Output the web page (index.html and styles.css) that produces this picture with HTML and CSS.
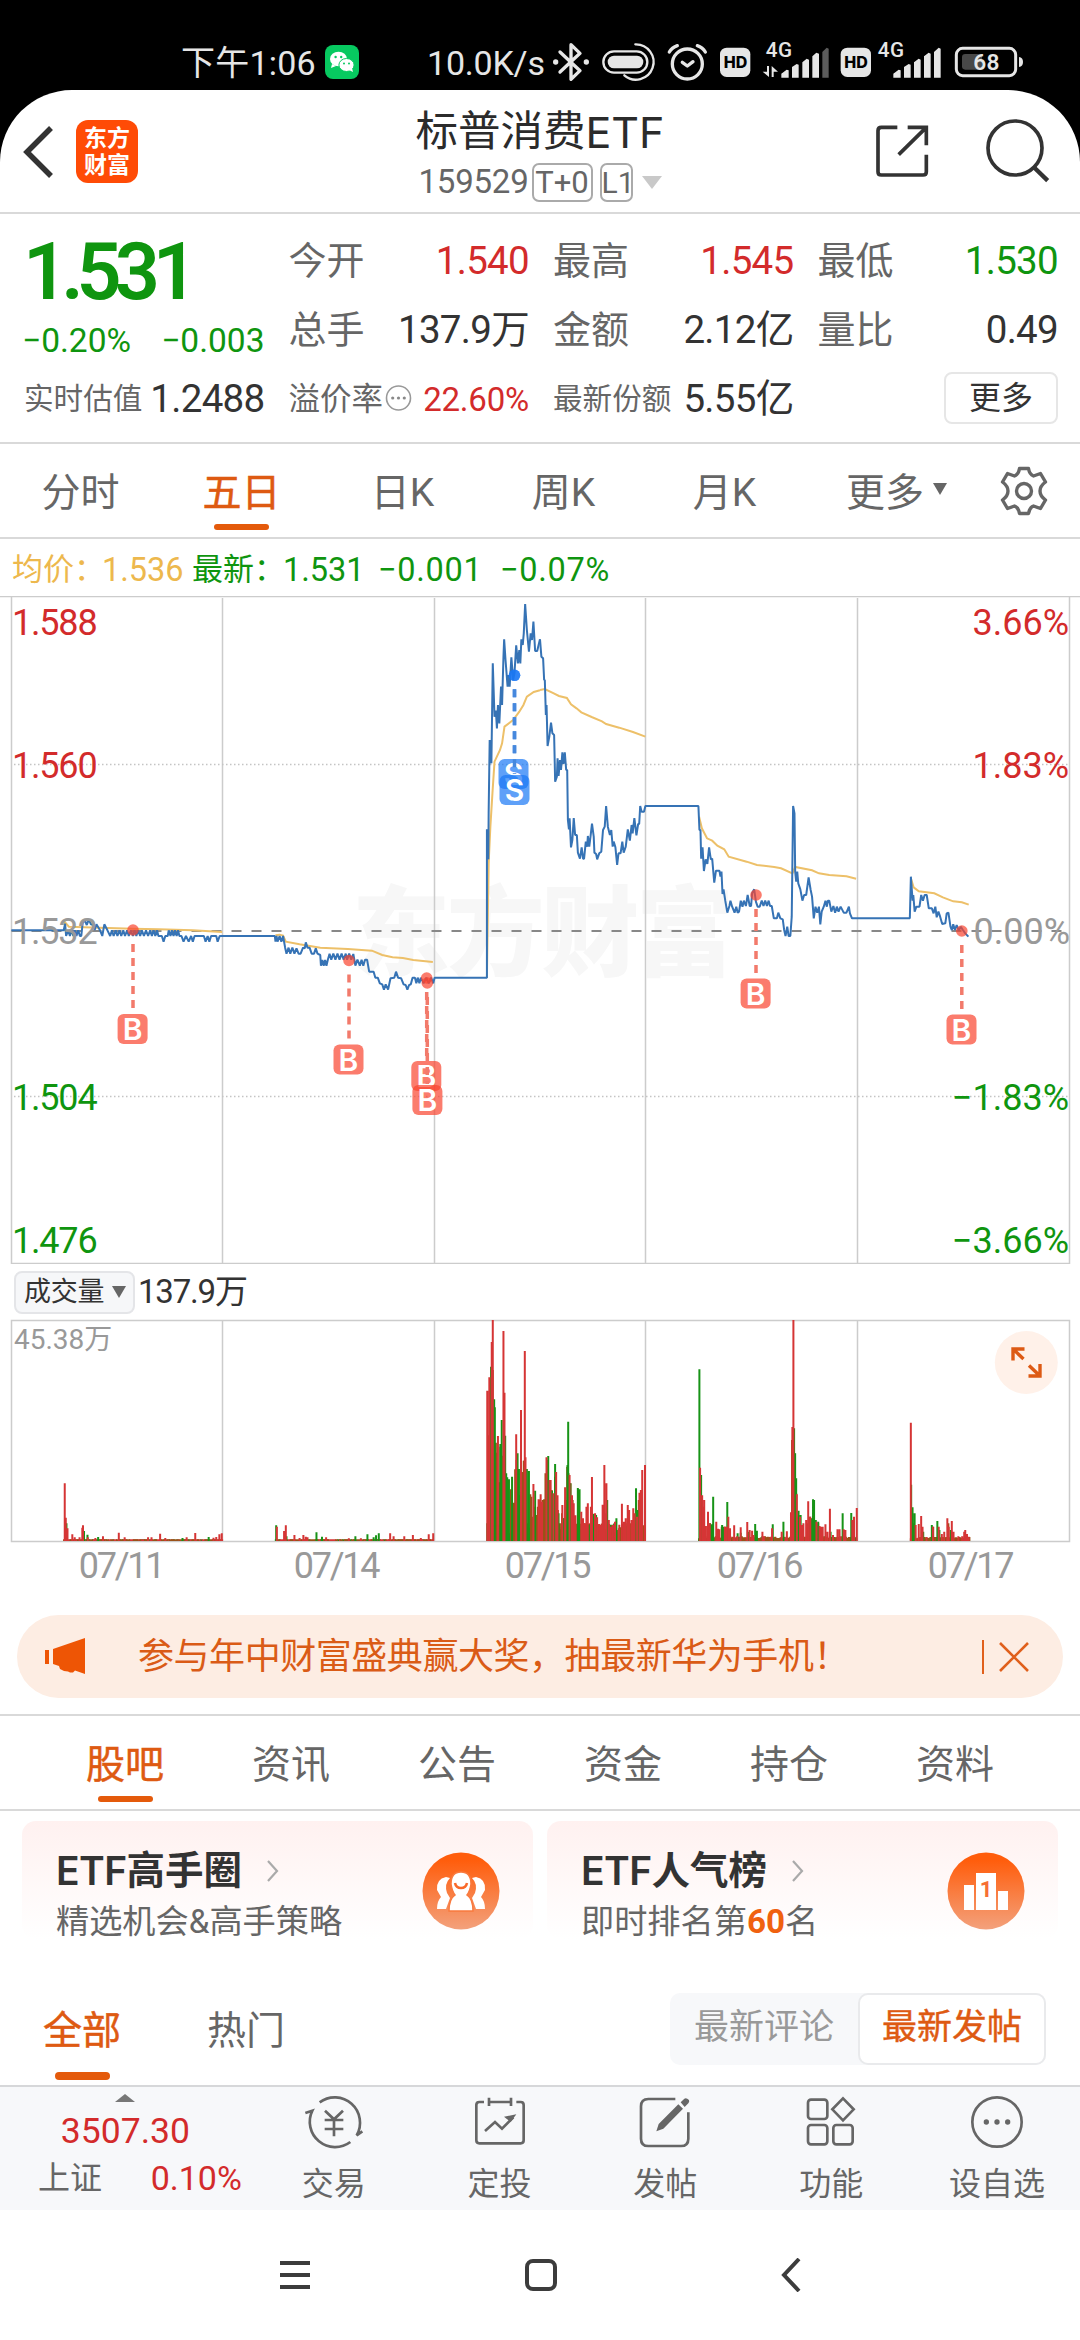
FILE: index.html
```html
<!DOCTYPE html>
<html lang="zh-CN">
<head>
<meta charset="utf-8">
<title>标普消费ETF</title>
<link rel="stylesheet" href="styles.css">
</head>
<body>
<div class="status">
  <span class="clock">下午1:06</span>
  <svg class="wechat" width="34" height="34" viewBox="0 0 34 34"><rect width="34" height="34" rx="8" fill="#07c960"/><ellipse cx="13.5" cy="14" rx="8.5" ry="7.3" fill="#fff"/><path d="M7 19l-1 4 5-2z" fill="#fff"/><ellipse cx="21.5" cy="20" rx="7.6" ry="6.5" fill="#fff" stroke="#07c960" stroke-width="1"/><path d="M24 25l4 2-1-4z" fill="#fff"/><g fill="#07c960"><circle cx="10.6" cy="12" r="1.2"/><circle cx="16.2" cy="12" r="1.2"/><circle cx="19" cy="18.4" r="1"/><circle cx="24" cy="18.4" r="1"/></g></svg>
  <span class="speed">10.0K/s</span>
  <svg class="status-icons" width="484" height="60" viewBox="30 0 1452 180">
    <g fill="none" stroke="#e6e6e6" stroke-width="8" stroke-linecap="round" stroke-linejoin="round">
      <path d="M60 66L120 122 93 148V44L120 70 60 126" stroke-width="10"/>
      <rect x="190" y="64" width="132" height="64" rx="32" stroke-width="7"/>
      <path d="M286 43A53 53 0 1 1 253 136" stroke-width="7"/>
      <circle cx="442" cy="102" r="45" stroke-width="10"/>
      <path d="M427 97L442 108 459 95M388 66Q396 52 412 47M496 66Q488 52 472 47" stroke-width="10"/>
      <rect x="1249" y="55" width="178" height="82" rx="19" stroke-width="9"/>
    </g>
    <g fill="#e6e6e6">
      <circle cx="47" cy="96" r="8"/><circle cx="139" cy="96" r="8"/>
      <rect x="203" y="77" width="107" height="38" rx="19"/>
      <rect x="540" y="53" width="91" height="88" rx="20"/><rect x="902" y="53" width="91" height="88" rx="20"/>
      <path d="M724 143V131L740 119 746 121V143zM756 143V111L770 102 776 104V143zM787 143V97L800 86 807 89V143zM817 143V79L829 68 837 71V143zM1060 143V131L1076 119 1082 121V143zM1092 143V111L1106 102 1112 104V143zM1122 143V97L1136 86 1142 89V143zM1152 143V79L1166 68 1172 71V143zM1182 143V66L1196 53 1202 56V143z"/>
      <path d="M681 108H687V141L668 125H681zM695 141V108L714 125H701V141z"/>
      <path d="M1437 81Q1449 83 1449 96 1449 109 1437 111z"/>
    </g>
    <path d="M847 143V66L860 53 866 56V143z" fill="#5c5c5c"/>
    <path d="M1276 72H1326V119H1276Q1266 119 1266 109V82Q1266 72 1276 72z" fill="#484848"/>
    <g class="status-text"><text x="551" y="113" class="hd">HD</text><text x="913" y="113" class="hd">HD</text><text x="677" y="82" class="g4">4G</text><text x="1013" y="82" class="g4">4G</text><text x="1300" y="121" class="pct">68</text></g>
  </svg>
</div>

<main class="app">
  <header class="header">
    <div class="header-left">
      <svg class="back" width="32" height="54" viewBox="0 0 32 54" fill="none" stroke="#333" stroke-width="5.500"><path d="M29 3L5 27 29 51"/></svg>
      <div class="logo"><span>东方</span><span>财富</span></div>
    </div>
    <div class="title">
      <h1>标普消费<span class="latin">ETF</span></h1>
      <div class="code"><span class="num">159529</span><span class="tag">T+0</span><span class="tag tag-l">L1</span><svg width="20" height="13" viewBox="0 0 20 13"><path d="M0 0H20L10 13z" fill="#c9c9c9"/></svg></div>
    </div>
    <svg class="header-icons" width="176" height="66" viewBox="1000 262 528 198" fill="none" stroke="#333" stroke-width="11">
      <path d="M1070 293H1022Q1012 293 1012 303V426Q1012 436 1022 436H1147Q1157 436 1157 426V375M1101 293H1157V347M1157 293L1074 375"/>
      <circle cx="1423" cy="355" r="81"/><path d="M1479 412L1521 453" stroke-width="13"/>
    </svg>
  </header>

  <section class="quote">
    <div class="price down"><b>1.531</b><p><span>−0.20%</span><span>−0.003</span></p></div>
    <div class="stat"><label>今开</label><span class="up">1.540</span></div>
    <div class="stat"><label>最高</label><span class="up">1.545</span></div>
    <div class="stat"><label>最低</label><span class="down">1.530</span></div>
    <div class="stat"><label>总手</label><span>137.9万</span></div>
    <div class="stat"><label>金额</label><span>2.12亿</span></div>
    <div class="stat"><label>量比</label><span>0.49</span></div>
    <div class="stat small"><label>实时估值</label><span>1.2488</span></div>
    <div class="stat mid"><label>溢价率</label><svg width="27" height="28" viewBox="0 0 27 28"><circle cx="13.5" cy="14" r="12" fill="none" stroke="#999" stroke-width="1.6"/><g fill="#888"><circle cx="7.7" cy="14" r="1.6"/><circle cx="13.5" cy="14" r="1.6"/><circle cx="19.3" cy="14" r="1.6"/></g></svg><span class="up">22.60%</span></div>
    <div class="stat small"><label>最新份额</label><span>5.55亿</span></div>
    <div class="stat end"><button class="more">更多</button></div>
  </section>

  <nav class="periods">
    <a>分时</a><a class="on">五日</a><a>日K</a><a>周K</a><a>月K</a>
    <a class="drop">更多<svg width="14" height="12" viewBox="0 0 14 12"><path d="M0 0H14L7 12z" fill="#666"/></svg></a>
    <svg class="gear" width="48" height="50" viewBox="0 0 48 50" fill="none" stroke="#666" stroke-width="3.4" stroke-linejoin="round"><path d="M19.500 2.500h9q1 6 5 7.500l7-2.500 5 8.500q-5.500 4-5.500 9t5.500 9l-5 8.500-7-2.500q-4 1.500-5 7.500h-9q-1-6-5-7.500l-7 2.500-5-8.500q5.500-4 5.500-9t-5.500-9l5-8.500 7 2.500q4-1.500 5-7.500z"/><circle cx="24" cy="25" r="7.500"/></svg>
  </nav>

  <div class="legend"><span class="avg">均价：</span><span class="avg">1.536</span><span class="down">最新：</span><span class="down">1.531</span><span class="down wide">−0.001</span><span class="down wide">−0.07%</span></div>

  <svg class="chart" width="1080" height="668" viewBox="0 596 1080 668">
    <text class="watermark" x="352" y="968" textLength="382">东方财富</text>
    <g class="grid">
      <path d="M0 596.500H1080M11.500 596V1263.500H1069.500V596M222.500 598V1263M434.500 598V1263M645.500 598V1263M857.500 598V1263"/>
      <path class="dots" d="M14 764.500H1068M14 1096.500H1068"/>
      <path class="zero" d="M11.500 931H1066"/>
    </g>
    <g class="average">
      <g transform="translate(0 580) scale(.34436 .33333)"><path d="M186 1035L189 1027 200 1040 290 1043 386 1046 460 1048 560 1051 645 1056M800 1066L812 1064 822 1067 830 1085 870 1093 930 1103 1010 1107 1080 1112 1110 1125 1140 1132 1170 1134 1200 1140 1257 1146M1414 1193L1419 850 1424 740 1430 640 1436 545 1452 510 1458 490 1465 440 1490 420 1508 395 1520 375 1530 350 1550 336 1568 331"/></g>
      <g transform="translate(540 580) scale(.34436 .33333)"><path d="M0 330L14 327 40 340 55 348 78 354 90 373 106 385 120 397 150 411 180 424 192 432 230 443 270 456 306 470M462 710L470 745 485 775 500 782 515 797 535 808 548 830 600 845 630 855 680 861 700 865 733 880 741 861 790 871 810 880 840 885 890 889 918 896M1077 895L1085 922 1100 934 1145 940 1170 952 1200 964 1225 967 1245 974"/></g>
    </g>
    <g class="price-line">
      <g transform="translate(0 580) scale(.34436 .33333)"><path d="M33 1051H185L189 1031 192 1068 198 1051 203 1068 208 1051 213 1068 217 1051 222 1068 227 1051 232 1068 236 1068 240 1030 246 1020 252 1035 258 1018 264 1033 271 1035 275 1050 280 1033 290 1050 297 1068 303 1033 312 1051 320 1068 325 1051 330 1068 336 1051 341 1068 347 1051 352 1068 358 1051 363 1068 369 1051 374 1068 380 1051 386 1068 391 1051 396 1068 401 1051 407 1068 412 1051 418 1068 424 1051 430 1068 436 1051 441 1068 446 1051 451 1068 456 1051 460 1068H470L475 1085 480 1068 487 1068 490 1051 495 1068 499 1051 504 1068 508 1051 513 1068 517 1051 521 1068H527L533 1085 540 1068 548 1085 555 1068 560 1085 565 1068H592L597 1085 603 1068 608 1085 613 1068H628L632 1085 638 1068H798L800 1085 803 1068 806 1085 812 1068 817 1085 822 1068 828 1103 832 1121 838 1103 843 1121 849 1103 855 1121 861 1105 867 1121H873L880 1103 885 1105 888 1087 893 1103H899L905 1121H912L917 1105 922 1121 930 1125 932 1157 936 1140 940 1157 944 1140 948 1157 952 1139 957 1121 962 1139 968 1121 974 1139 980 1121 986 1139 992 1121 998 1139 1004 1121 1008 1139 1014 1121 1020 1139 1026 1122 1032 1157 1038 1139 1045 1157 1050 1139 1055 1157 1060 1139H1066L1072 1175H1085L1090 1193H1097L1103 1210 1110 1213 1115 1229 1120 1213 1127 1229 1134 1195 1145 1193 1150 1175 1156 1193 1165 1195 1172 1213 1178 1215 1183 1229 1188 1215 1193 1213 1198 1193 1205 1193 1209 1210 1213 1193 1218 1210 1222 1193 1230 1210 1238 1193 1245 1210 1252 1193 1258 1210 1262 1193H1414V748L1418 838 1419 700 1422 480 1427 550 1431 250 1436 410 1440 392 1443 445 1446 375 1450 430 1455 320 1458 375 1462 230 1464 178 1468 240 1474 320 1477 285 1480 320 1485 232 1490 300 1494 280 1499 196 1504 250 1508 210 1511 250 1514 178 1518 195 1521 160 1525 72 1530 150 1536 215 1541 160 1545 180 1549 125 1554 213 1560 213 1568 178"/></g>
      <g transform="translate(540 580) scale(.34436 .33333)"><path d="M0 178L4 230 9 235 12 300 14 300 17 405 19 375 22 498 27 470 32 428 36 460 41 465 44 605 49 590 51 535 54 588 58 540 61 570 65 517 68 552 72 517 76 570 79 570 81 720 84 748 86 715 90 802 94 780 98 714 102 765 107 765 110 818 116 836 121 802 125 836 128 836 133 785 137 800 139 768 143 800 147 767 151 731 156 770 158 818 163 822 166 838 172 820 178 815 183 750 188 740 192 678 197 740 203 765 207 750 211 800 214 785 219 802 224 855 228 820 234 820 239 785 243 818 249 800 255 748 261 782 266 735 269 760 274 714 280 766 285 732 288 732 291 678 295 695 302 695 306 678H460L463 750 466 750 468 836 472 802 476 873 481 838 486 852 491 802 496 838 500 836 506 908 511 872 521 872 524 890 527 875 530 942 533 928 538 962 544 998 550 978 553 962 558 980 565 998 570 980 574 998 578 995 583 962 588 980 592 962 598 978 603 945 609 978 613 978 616 940 622 928 627 965 632 980 638 980 644 962 649 978 654 962 659 978 664 962 668 978 673 978 679 1015 688 1015 692 998 698 1015 705 1018 709 1050 713 1068 718 1040 722 1068 727 1068 731 1010 735 678 739 700 741 875 744 905 747 875 750 910 756 928 762 962 767 945 773 945 780 892 786 930 790 950 795 1015 800 980 805 998 810 980 814 1033 818 995 824 980 829 962 833 980 836 962 840 962 846 995 852 978 857 998 862 980 867 995 873 980 882 998 890 998 897 980 900 1000 906 1015H1074L1077 890 1082 962 1084 945 1088 995 1093 980 1102 980 1107 945 1112 962 1117 945 1123 945 1129 985 1138 985 1143 1000 1148 980 1152 1012 1157 995 1162 1010 1168 1032 1177 1030 1181 1000 1186 998 1192 1040 1196 1050 1200 1033 1205 1050 1210 1035 1216 1052 1222 1040 1228 1050 1235 1060 1244 1070"/></g>
    </g>
    <g class="axis up"><text x="12" y="635">1.588</text><text x="12" y="778">1.560</text><text class="r" x="1069" y="635">3.66%</text><text class="r" x="1069" y="778">1.83%</text></g>
    <g class="axis mute"><text x="12" y="944">1.532</text><text class="r" x="1070" y="944">0.00%</text></g>
    <g class="axis down"><text x="12" y="1110">1.504</text><text x="12" y="1253">1.476</text><text class="r" x="1069" y="1110">−1.83%</text><text class="r" x="1069" y="1253">−3.66%</text></g>
    <g id="marks"></g>
  </svg>

  <div class="vol-head"><button>成交量<svg width="14" height="12" viewBox="0 0 14 12"><path d="M0 0H14L7 12z" fill="#666"/></svg></button><span>137.9万</span></div>

  <svg class="volume" width="1080" height="271" viewBox="0 1319 1080 271">
    <path class="grid" d="M11.500 1320.500H1069.500V1541.500H11.500zM222.500 1321V1541M434.500 1321V1541M645.500 1321V1541M857.500 1321V1541"/>
    <g transform="translate(0 1260) scale(.34436 .33333)" id="bars"></g>
    <text class="vol-max" x="14" y="1349">45.38万</text>
    <g class="dates"><text x="121" y="1577.500">07/11</text><text x="336" y="1577.500">07/14</text><text x="547" y="1577.500">07/15</text><text x="759" y="1577.500">07/16</text><text x="970" y="1577.500">07/17</text></g>
    <circle cx="1026.300" cy="1362.500" r="31.500" fill="#fff1e9"/>
    <path d="M1024.500 1349H1013V1360.500M1013 1349L1023.500 1359M1029 1365.500L1040 1376M1040 1364V1376H1028.500" fill="none" stroke="#dd5a14" stroke-width="3.400"/>
  </svg>

  <div class="banner">
    <svg class="horn" width="44" height="40" viewBox="0 0 44 40" fill="#ee5505"><path d="M1 13H5V27H1zM9 12L41 1V37L31 33.500 29 35.500H26L24 34.500 20 34 16 32 15 29 9 27z"/></svg>
    <span>参与年中财富盛典赢大奖，抽最新华为手机！</span>
    <i class="sep"></i>
    <svg width="30" height="30" viewBox="0 0 30 30" fill="none" stroke="#e0601c" stroke-width="2.600"><path d="M1 1L29 29M29 1L1 29"/></svg>
  </div>

  <nav class="sections"><a class="on">股吧</a><a>资讯</a><a>公告</a><a>资金</a><a>持仓</a><a>资料</a></nav>

  <div class="cards">
    <div class="card">
      <div><h2><span class="latin">ETF</span>高手圈<svg width="13" height="22" viewBox="0 0 13 22"><path d="M2 1L11 11 2 21" fill="none" stroke="#aaa" stroke-width="2.200"/></svg></h2><p>精选机会&amp;高手策略</p></div>
      <svg class="badge" width="78" height="78" viewBox="0 0 78 78"><defs><linearGradient id="o" x1="0" y1="0" x2="0" y2="1"><stop offset=".1" stop-color="#ff5d0c"/><stop offset="1" stop-color="#f3a17c"/></linearGradient></defs><circle cx="39" cy="39" r="38.500" fill="url(#o)"/><path d="M24 25Q14 27 15 38L19 45Q15 49 15 57H24L28 46 25 41Q22 32 28 26zM54 25Q64 27 63 38L59 45Q63 49 63 57H54L50 46 53 41Q56 32 50 26z" fill="#fff"/><path d="M39 20Q49 20 49 32 48 39 45 43 51 47 51 59H27Q27 47 33 43 30 39 29 32 29 20 39 20z" fill="#fff" stroke="#f97a3e" stroke-width="1.500"/><path d="M33 31Q34 36 39 36 44 36 45 31" fill="none" stroke="#f9692a" stroke-width="2.500"/></svg>
    </div>
    <div class="card">
      <div><h2><span class="latin">ETF</span>人气榜<svg width="13" height="22" viewBox="0 0 13 22"><path d="M2 1L11 11 2 21" fill="none" stroke="#aaa" stroke-width="2.200"/></svg></h2><p>即时排名第<b>60</b>名</p></div>
      <svg class="badge" width="78" height="78" viewBox="0 0 78 78"><circle cx="39" cy="39" r="38.500" fill="url(#o)"/><path d="M17 33H27V58H17zM29 21H49V58H29zM51 39H61V58H51z" fill="#fff"/><text x="39" y="45" class="rank">1</text></svg>
    </div>
  </div>

  <div class="filter">
    <a class="on">全部</a><a>热门</a>
    <div class="seg"><span>最新评论</span><span class="sel">最新发帖</span></div>
  </div>

  <footer class="bottom">
    <div class="index"><svg width="20" height="8" viewBox="0 0 20 8"><path d="M0 8L10 0 20 8z" fill="#777"/></svg><b>3507.30</b><p><span>上证</span><em>0.10%</em></p></div>
    <div class="tool"><svg width="64" height="56" viewBox="68 40 192 168"><path d="M121 65A76 76 0 0 1 232 164L249 152M213 184A76 76 0 0 1 99 90L78 97"/><path d="M137 90L164 116 191 90M136 118H192M136 145H192M164 116V167"/></svg>交易</div>
    <div class="tool"><svg width="56" height="56" viewBox="576 40 168 168"><path d="M612 64H598Q589 64 589 73V179Q589 188 598 188H722Q731 188 731 179V73Q731 64 722 64H709M627 51V76M693 51V76M627 64H693M615 151L645 124 666 144 700 110"/><path d="M672 108L709 101 692 124z" fill="#666" stroke="none"/></svg>定投</div>
    <div class="tool"><svg width="56" height="56" viewBox="1072 40 168 168"><path d="M1187 55H1106Q1084 55 1084 77V174Q1084 196 1106 196H1204Q1226 196 1226 174V95"/><path d="M1130 152L1137 130 1196 71 1210 84 1151 144zM1203 65L1214 54Q1220 50 1228 58 1230 64 1226 68L1215 79z" fill="#666" stroke="none"/></svg>发帖</div>
    <div class="tool"><svg width="56" height="56" viewBox="0 0 168 168"><rect x="15" y="17" width="58" height="58" rx="9"/><rect x="15" y="93" width="58" height="58" rx="9"/><rect x="91" y="93" width="58" height="58" rx="9"/><path d="M120 13L152 46 120 79 88 46z"/></svg>功能</div>
    <div class="tool"><svg width="56" height="56" viewBox="0 0 168 168"><circle cx="84" cy="84" r="74"/><g fill="#666" stroke="none"><circle cx="52" cy="84" r="8"/><circle cx="84" cy="84" r="8"/><circle cx="116" cy="84" r="8"/></g></svg>设自选</div>
  </footer>
</main>

<div class="sysnav">
  <svg width="30" height="28" viewBox="0 0 30 28"><path d="M0 2H30M0 14H30M0 26H30"/></svg>
  <svg width="32" height="32" viewBox="0 0 32 32"><rect x="2" y="2" width="28" height="28" rx="6"/></svg>
  <svg width="20" height="34" viewBox="0 0 20 34"><path d="M18 1L3 17 18 33"/></svg>
</div>
<script src="script.js"></script>
</body>
</html>
```
FILE: styles.css
```css
* { box-sizing: border-box; }
body { margin: 0; width: 1080px; height: 2340px; overflow: hidden; background: #000; color: #333; font-family: Roboto, "Noto Sans CJK SC", sans-serif; font-size: 38px; line-height: 1.2; }
h1, h2, p { margin: 0; font-weight: 400; }
button { font: inherit; color: inherit; padding: 0; }
svg { display: block; flex: none; }
.up { color: #d32b2b; fill: #d32b2b; }
.down { color: #0f950f; fill: #0f950f; }
.mute { fill: #999; }
.latin { font-family: Inter, sans-serif; }

.status { height: 90px; padding: 36px 0 0 181px; display: flex; align-items: center; color: #e6e6e6; font-size: 34px; white-space: nowrap; }
.clock { width: 144px; font-size: 34px; letter-spacing: .2px; }
.wechat { margin-right: 68px; margin-top: -2px; }
.speed { width: 123px; letter-spacing: -.2px; }
.status-icons { margin-top: -6px; }
.status-text { font-family: Inter, sans-serif; }
.status-text .hd { font-size: 48px; font-weight: 800; fill: #000; }
.status-text .g4 { font-size: 62px; letter-spacing: 2px; font-weight: 500; fill: #e6e6e6; font-family: Roboto; }
.status-text .pct { font-size: 68px; letter-spacing: 1px; font-weight: 600; fill: #e6e6e6; font-family: Roboto; }

.app { background: #fff; border-radius: 72px 72px 0 0; height: 2120px; display: flex; flex-direction: column; }
.header { height: 124px; border-bottom: 2px solid #d9d9d9; display: grid; grid-template-columns: 1fr auto 1fr; }
.header-left { display: flex; padding: 30px 0 0 22px; }
.back { margin-top: 5px; }
.logo { width: 62px; height: 63px; margin-left: 22px; border-radius: 12px; background: #ff4b06; color: #fff; font-size: 23px; font-weight: 700; line-height: 27px; display: flex; flex-direction: column; align-items: center; justify-content: center; }
.title { display: flex; flex-direction: column; align-items: center; padding-top: 15px; }
.title h1 { font-size: 42.500px; line-height: 54px; color: #2b2b2b; display: flex; }
.title h1 .latin { font-size: 43px; }
.code { display: flex; align-items: center; height: 46px; color: #666; font-size: 33px; }
.code .num { letter-spacing: -.2px; }
.tag { border: 2px solid #aaa; border-radius: 7px; height: 39px; line-height: 36px; width: 61px; text-align: center; font-size: 31px; margin-left: 3px; }
.tag-l { width: 33px; margin: 0 9px 0 7px; font-size: 30px; }
.header-icons { justify-self: end; margin: 27px 30px 0 0; }

.quote { height: 230px; padding: 13px 23px 0 24px; border-bottom: 2px solid #d9d9d9; display: grid; grid-template-columns: repeat(4, 1fr); column-gap: 25px; grid-template-rows: repeat(3, 69px); white-space: nowrap; }
.price { grid-row: span 2; }
.price b { display: block; height: 90px; line-height: 90px; font-size: 79px; font-weight: 600; letter-spacing: -7px; margin-left: -1px; }
.price p { display: flex; justify-content: space-between; font-size: 33.500px; line-height: 48px; margin: 0 -1px 0 -2px; }
.stat { display: flex; align-items: center; justify-content: space-between; font-size: 38.5px; }
.stat span { letter-spacing: -.7px; margin-right: -1px; }
.stat label { color: #666; font-size: 38px; }
.small label { font-size: 29.6px; }
.mid { font-size: 33px; }
.mid span { letter-spacing: -.2px; }
.mid label { font-size: 31.5px; }
.mid svg { margin-right: 9px; margin-top: -4px; }
.stat.end { justify-content: flex-end; }
.more { width: 114px; height: 52px; border: 2px solid #e6e6e6; border-radius: 8px; background: #fff; font-size: 32px; line-height: 46px; margin-top: -4px; margin-right: -1px; }

.periods { height: 95px; border-bottom: 2px solid #d9d9d9; display: flex; align-items: center; color: #666; font-size: 39px; }
.periods a { width: 161px; height: 93px; line-height: 98px; text-align: center; }
.on { color: #de5a12; -webkit-text-stroke: .5px #de5a12; display: flex; flex-direction: column; align-items: center; position: relative; }
.on::after { content: ""; position: absolute; bottom: 7px; width: 55px; height: 6px; border-radius: 3px; background: #e45a0b; }
.periods .drop { width: 194px; padding: 4px 0 0 41px; display: flex; align-items: center; }
.drop svg { margin: -7px 0 0 9px; }
.gear { margin-left: 1px; }

.legend { height: 57px; padding-left: 12px; display: grid; grid-template-columns: 90px 90px 91px 95px 122px auto; align-items: center; justify-content: start; font-size: 32.5px; padding-top: 5px; white-space: nowrap; }
.legend span:nth-child(odd):nth-child(-n+3) { font-size: 31px; }
.legend .wide { letter-spacing: .7px; }
.avg { color: #edb84d; }

.grid { fill: none; stroke: #ccc; stroke-width: 2; }
.grid path { stroke-width: 1.5; }
.grid .dots { stroke-dasharray: 1.500 2.500; stroke: #c4c4c4; }
.grid .zero { stroke: #888; stroke-width: 2; stroke-dasharray: 10 10; }
.watermark { font-weight: 900; font-size: 98px; fill: #f7f7f7; }
.average path, .price-line path { fill: none; stroke: #edc069; stroke-width: 2; vector-effect: non-scaling-stroke; }
.price-line path { stroke: #3673b5; stroke-linejoin: bevel; }
.axis { font-size: 36px; letter-spacing: -1.200px; }
.axis .r { text-anchor: end; letter-spacing: 0; }
.mark { fill: #f9452f; fill-opacity: .7; }
.mark-s { fill: #1a78f5; }
.stem { stroke: #f27a6b; stroke-width: 3.500; stroke-dasharray: 8 6; }
.mark-s .stem { stroke: #4688dd; }
.mark text { font-size: 30px; font-weight: 600; fill: #fff; fill-opacity: 1; text-anchor: middle; font-family: Inter, sans-serif; }

.vol-head { height: 55px; display: flex; align-items: center; padding-left: 14px; font-size: 33px; letter-spacing: -1.200px; padding-top: 1px; }
.vol-head button { width: 121px; height: 43px; border: 2px solid #e4e5e8; border-radius: 8px; background: #f6f7f9; font-size: 27px; letter-spacing: -.2px; display: flex; align-items: center; padding-left: 8px; margin-right: 3px; }
.vol-head svg { margin-left: 8px; }
.volume .grid { stroke-width: 1.500; }
.volume .bar { fill: none; stroke-width: 2; vector-effect: non-scaling-stroke; }
.red { stroke: #d53535; }
.green { stroke: #179317; }
.mix { stroke: #9a5218; }
.vol-max { font-size: 28px; fill: #999; }
.dates { font-size: 36px; fill: #999; text-anchor: middle; letter-spacing: -2.300px; }

.banner { margin: 25px 17px 16px; height: 83px; border-radius: 42px; background: #fdede3; color: #da5b16; font-size: 36px; display: flex; align-items: center; white-space: nowrap; letter-spacing: -.45px; }
.horn { margin: 0 50px 0 27px; }
.banner span { width: 844px; padding-top: 3px; }
.sep { width: 2px; height: 34px; background: #e0601c; margin-right: 15px; }

.sections { height: 97px; border-top: 2px solid #d9d9d9; border-bottom: 2px solid #d9d9d9; display: flex; padding: 0 42px; color: #666; font-size: 39px; line-height: 98px; text-align: center; }
.sections a { width: 166px; }

.cards { display: flex; gap: 14px; padding: 10px 22px 0; height: 133px; }
.card { width: 511px; height: 118px; padding: 23px 33px 0 34px; border-radius: 14px; background: linear-gradient(#fff1f0, #fff); display: flex; justify-content: space-between; white-space: nowrap; }
.card h2 { font-weight: 700; font-size: 38.500px; line-height: 54px; display: flex; align-items: center; }
.card h2 .latin { font-size: 39px; letter-spacing: -.6px; font-weight: 600; }
.card h2 svg { margin-left: 24px; }
.card p { font-size: 33.200px; line-height: 48px; color: #666; }
.card p b { color: #f0610f; }
.badge { margin-top: 8px; }
.rank { font-size: 22px; font-weight: 700; text-anchor: middle; fill: #f66f33; }

.filter { flex: 1; display: flex; padding: 49px 34px 0 43px; color: #666; font-size: 39px; }
.filter > a { margin-right: 86px; line-height: 76px; height: 90px; }
.filter .on::after { bottom: 3px; height: 8px; border-radius: 4px; }
.seg { margin-left: auto; margin-top: 0; height: 72px; display: flex; background: #f7f8fa; border-radius: 10px; font-size: 35px; line-height: 69px; color: #999; }
.seg span { width: 188px; text-align: center; }
.seg .sel { border: 2px solid #e9eaec; border-radius: 10px; background: #fff; color: #de5a12; -webkit-text-stroke: .4px #de5a12; line-height: 66px; }

.bottom { height: 125px; border-top: 2px solid #d6d7d9; background: #f7f8fa; display: flex; }
.index { width: 251px; display: flex; flex-direction: column; align-items: center; padding: 7px 0 0; color: #d32b2b; }
.index b { font-weight: 400; font-size: 35.500px; line-height: 58px; }
.index p { width: 204px; margin-left: 29px; display: flex; justify-content: space-between; align-items: center; font-size: 32px; line-height: 36px; color: #666; }
.index em { font-style: normal; font-size: 34px; color: #d32b2b; }
.tool { width: 166px; display: flex; flex-direction: column; align-items: center; padding-top: 7px; font-size: 32px; line-height: 69px; color: #666; }
.tool svg { fill: none; stroke: #666; stroke-width: 8; }

.sysnav { height: 130px; background: #fff; display: flex; align-items: center; justify-content: center; gap: 215px; }
.sysnav svg { fill: none; stroke: #3c3c3c; stroke-width: 4; }
.sysnav svg:nth-child(3) { margin-left: 9px; }
```
FILE: script.js
```javascript
const NS = "http://www.w3.org/2000/svg";

// Trades drawn over the price line: dot x, dot y, badge x, badge y, side
const trades = [
  [133, 930, 132.6, 1029, "B"], [349, 960.5, 348.5, 1059.5, "B"],
  [426.7, 978, 426.3, 1076, "B"], [427.3, 983, 427.4, 1100, "B"],
  [756, 895, 755.6, 993.5, "B"], [961.8, 931, 961.5, 1029.5, "B"],
  [514.5, 675.3, 513.5, 774, "S"], [514.5, 675.3, 514.5, 790, "S"]
];
document.getElementById("marks").innerHTML = trades.map(([x, y, bx, by, t]) =>
  `<g class="mark${t === "S" ? " mark-s" : ""}"><circle cx="${x}" cy="${y}" r="5.8"/>` +
  `<path class="stem" d="M${x} ${y + 14}V${by - 16}"/>` +
  `<rect x="${bx - 15}" y="${by - 15}" width="30" height="30" rx="6"/>` +
  `<text x="${bx}" y="${by + 11}">${t}</text></g>`).join("");

// Volume bars as x:top pairs; the axis sits at 843 in the same units
const bars = {
  mix: "1418:526 1424:360 1428:330 1431:330 1440:548 1443:578 1450:667 1453:560 1460:587 1457:600 1483:688 1492:728 1496:628 1500:600 1505:640 1510:705 1517:636 1521:602 1524:600 1528:660 1540:703 1543:710 1547:770 1552:740 1558:765 1562:740 1566:720 1576:720 1580:718 1584:640 1589:600 1593:660 1597:700 1602:690 1607:720 1612:650 1616:730 1620:750 1626:790 1632:760 1637:775 1642:720 1647:620 1651:640 1657:670 1663:720 1668:770 1675:800 1681:700 1690:780 1697:790 1710:800 1720:760 1728:762 1738:800 1750:790 1756:760 1763:720 1770:800 1778:795 1784:790 1788:785 1795:810 1806:800 1820:810 1832:790 1845:790 1855:720 1862:700 2033:650 2038:740 2047:800 2057:810 2066:795 2096:800 2106:800 2300:540 2303:530 2307:580 2312:700 2319:770 2330:800 2346:790 2353:775 2362:780 2376:790 2648:750 2654:790 2710:800 2754:790",
  green: "193:790 244:813 254:824 285:831 530:834 606:831 802:796 832:829 919:817 935:830 1032:829 1067:823 1085:832 1092:826 1100:820 1426:320 1435:418 1437:442 1457:480 1453:552 1467:527 1470:640 1473:652 1478:658 1487:650 1503:580 1507:627 1530:627 1536:633 1554:692 1592:588 1603:692 1612:612 1622:760 1636:775 1648:615 1650:485 1656:670 1678:684 1683:688 1710:793 1724:762 1731:765 1763:720 1782:793 1790:775 1817:790 1847:685 1852:750 2031:328 2036:645 2062:790 2066:793 2071:710 2097:795 2101:800 2112:726 2142:820 2151:818 2172:815 2193:792 2198:812 2244:793 2275:785 2306:505 2309:580 2312:655 2319:752 2325:765 2352:770 2357:775 2361:718 2364:720 2369:780 2376:785 2412:815 2447:760 2472:759 2646:674 2650:742 2656:760 2681:815 2706:795 2722:783 2728:810 2761:810",
  red: "188:670 191:773 196:805 210:823 217:832 231:832 239:803 241:796 255:832 277:834 299:829 345:818 362:832 430:832 440:832 465:821 480:834 542:832 567:819 620:833 628:831 637:823 644:820 804:800 825:813 830:796 855:825 870:834 881:825 888:830 893:832 947:832 1013:835 1048:835 1133:820 1143:829 1174:829 1199:825 1222:834 1245:823 1258:820 1415:392 1421:352 1428:246 1431:180 1446:528 1462:213 1465:398 1499:523 1513:450 1524:273 1526:592 1549:672 1564:718 1570:703 1574:725 1587:592 1596:660 1599:660 1607:700 1615:636 1619:706 1633:735 1641:682 1654:645 1661:706 1666:730 1671:766 1688:755 1693:775 1698:790 1703:740 1707:730 1716:740 1719:651 1728:760 1734:772 1740:792 1745:795 1750:734 1755:615 1761:670 1768:780 1774:800 1780:795 1786:785 1797:805 1806:731 1812:785 1817:775 1823:735 1827:750 1834:780 1839:745 1843:760 1850:770 1857:698 1861:690 1865:630 1873:615 2033:623 2039:706 2042:740 2045:720 2050:798 2056:755 2061:790 2080:785 2085:806 2089:808 2105:800 2109:800 2115:770 2120:805 2132:796 2141:829 2151:802 2170:786 2177:810 2184:812 2188:825 2214:815 2218:829 2242:805 2270:815 2285:814 2297:757 2301:501 2304:180 2314:703 2323:770 2328:795 2333:790 2341:780 2347:724 2353:770 2371:785 2380:798 2385:800 2389:800 2397:793 2403:815 2410:746 2419:825 2432:808 2438:808 2450:808 2455:810 2475:780 2480:770 2488:744 2645:488 2659:795 2668:792 2675:768 2679:800 2709:800 2726:800 2735:822 2742:815 2751:775 2755:800 2764:783 2769:815 2783:829 2794:829 2800:815 2803:810 2808:822 2813:830"
};
// One-minute bars that barely rise above the axis
const floors = [[186, 646, 838], [801, 1260, 838], [1415, 1873, 806], [2030, 2488, 832], [2645, 2816, 833]];
let seed = 7;
const rand = () => (seed = seed * 16807 % 2147483647) / 2147483647;
const base = { mix: "", green: "", red: "" };
for (const [from, to, top] of floors)
  for (let x = from; x <= to; x += 2.7) {
    const r = rand();
    const kind = r < .5 ? "mix" : r < .68 ? "green" : "red";
    base[kind] += `M${x.toFixed(1)} 843V${Math.round(top + (rand() - .5) * (838 - top))}`;
  }
const path = (kind, d) => `<path class="bar ${kind}" d="${d}"/>`;
document.getElementById("bars").innerHTML =
  ["green", "red", "mix"].map(k => path(k, base[k])).join("") +
  ["mix", "green", "red"].map(k => path(k, bars[k].split(" ").map(p => {
    const [x, y] = p.split(":");
    return `M${x} 843V${y}`;
  }).join(""))).join("");
```
